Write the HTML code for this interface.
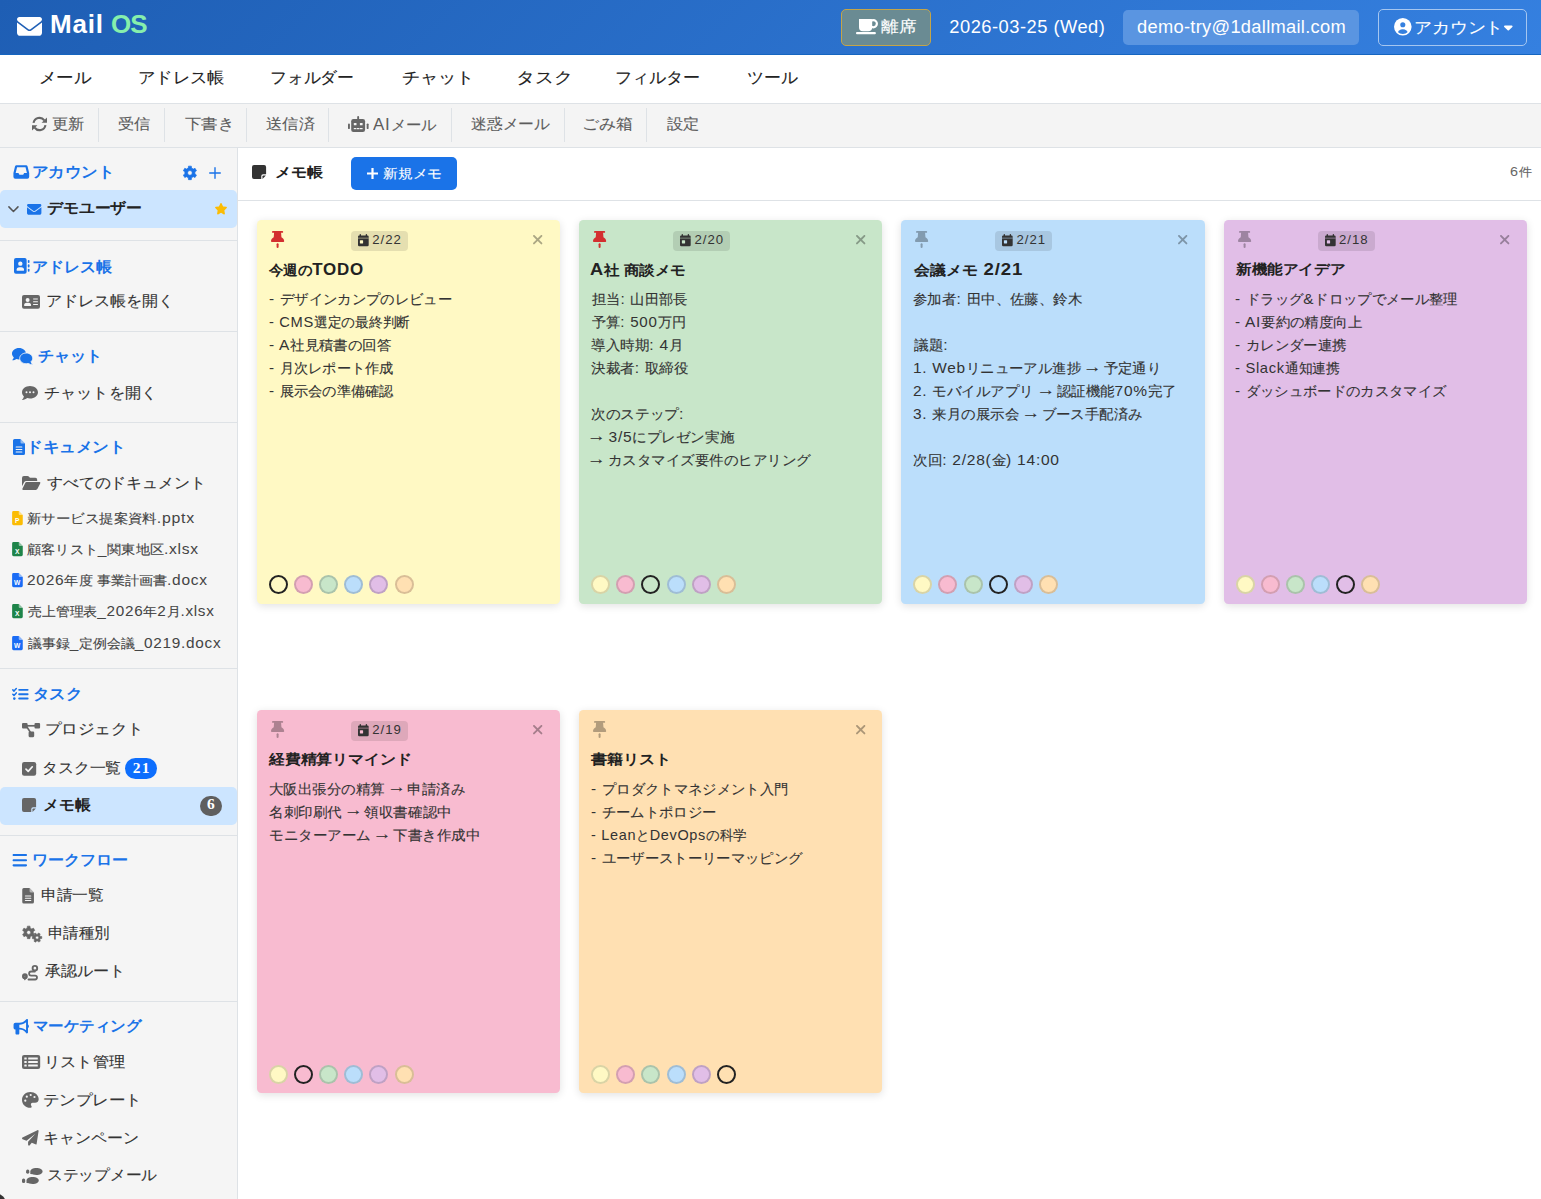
<!DOCTYPE html>
<html lang="ja">
<head>
<meta charset="utf-8">
<title>Mail OS</title>
<style>
*{box-sizing:border-box;margin:0;padding:0}
html,body{width:1541px;height:1199px;overflow:hidden;background:#fff}
body{font-family:"Liberation Sans",sans-serif;position:relative}
.b{position:absolute}
svg{position:absolute;overflow:visible}
#hdr{position:absolute;left:0;top:0;width:1541px;height:55px;background:linear-gradient(135deg,#1e5eb4 0%,#3580e0 100%);border-bottom:1px solid #1565c0}
#nav{position:absolute;left:0;top:55px;width:1541px;height:49px;background:#fff;border-bottom:1px solid #dee2e6}
#tb{position:absolute;left:0;top:104px;width:1541px;height:44px;background:#f4f4f4;border-bottom:1px solid #dee2e6}
#sb{position:absolute;left:0;top:148px;width:238px;height:1051px;background:#f5f5f5;border-right:1px solid #dee2e6}
#mh{position:absolute;left:238px;top:148px;width:1303px;height:53px;border-bottom:1px solid #dee2e6;background:#fff}
.card{border-radius:4.5px;box-shadow:0 2px 8px rgba(0,0,0,.12)}
.t{position:absolute;white-space:pre;line-height:24px;height:24px;transform-origin:0 50%}
.ar{display:inline-block;position:relative;top:-2.5px;transform:scale(1.3,1.15)}
</style>
</head>
<body>
<div id="hdr"></div><div id="nav"></div><div id="tb"></div><div id="sb"></div><div id="mh"></div>
<div class="b" style="left:841px;top:9px;width:90px;height:37px;border:1px solid #c4a548;border-radius:5px;background:#6a8b93"></div>
<div class="b" style="left:1123px;top:10px;width:236px;height:35px;border-radius:5px;background:#5a95e1"></div>
<div class="b" style="left:1378px;top:9px;width:149px;height:37px;border:1px solid #a5c6f0;border-radius:5px"></div>
<div class="b" style="left:98px;top:108px;width:1px;height:34px;background:#dee2e6"></div>
<div class="b" style="left:164px;top:108px;width:1px;height:34px;background:#dee2e6"></div>
<div class="b" style="left:246px;top:108px;width:1px;height:34px;background:#dee2e6"></div>
<div class="b" style="left:328px;top:108px;width:1px;height:34px;background:#dee2e6"></div>
<div class="b" style="left:451px;top:108px;width:1px;height:34px;background:#dee2e6"></div>
<div class="b" style="left:564px;top:108px;width:1px;height:34px;background:#dee2e6"></div>
<div class="b" style="left:646px;top:108px;width:1px;height:34px;background:#dee2e6"></div>
<div class="b" style="left:0;top:240px;width:237px;height:1px;background:#dee2e6"></div>
<div class="b" style="left:0;top:331px;width:237px;height:1px;background:#dee2e6"></div>
<div class="b" style="left:0;top:422px;width:237px;height:1px;background:#dee2e6"></div>
<div class="b" style="left:0;top:668px;width:237px;height:1px;background:#dee2e6"></div>
<div class="b" style="left:0;top:835px;width:237px;height:1px;background:#dee2e6"></div>
<div class="b" style="left:0;top:1001px;width:237px;height:1px;background:#dee2e6"></div>
<div class="b" style="left:0;top:190px;width:237px;height:38px;background:#cce5ff;border-radius:5px"></div>
<div class="b" style="left:0;top:787px;width:237px;height:38px;background:#cce5ff;border-radius:5px"></div>
<div class="b" style="left:125px;top:757.7px;width:32.1px;height:21.4px;background:#0d6efd;border-radius:10.7px"></div>
<div class="b" style="left:199.9px;top:795.9px;width:22px;height:20px;background:#5f5f5f;border-radius:10px"></div>
<div class="b" style="left:351px;top:157px;width:106px;height:33px;background:#1a73e8;border-radius:5px"></div>
<div class="b card" style="left:257px;top:220px;width:303px;height:384px;background:#fff9c4"></div>
<div class="b" style="left:350.9px;top:231.1px;width:57px;height:19.7px;border-radius:4px;background:rgba(0,0,0,.1)"></div>
<div class="b" style="left:269.0px;top:575.0px;width:19px;height:19px;border-radius:50%;background:#fff9c4;border:2px solid #222"></div>
<div class="b" style="left:294.1px;top:575.0px;width:19px;height:19px;border-radius:50%;background:#f8bbd0;border:2px solid rgba(0,0,0,.15)"></div>
<div class="b" style="left:319.2px;top:575.0px;width:19px;height:19px;border-radius:50%;background:#c8e6c9;border:2px solid rgba(0,0,0,.15)"></div>
<div class="b" style="left:344.3px;top:575.0px;width:19px;height:19px;border-radius:50%;background:#bbdefb;border:2px solid rgba(0,0,0,.15)"></div>
<div class="b" style="left:369.4px;top:575.0px;width:19px;height:19px;border-radius:50%;background:#e1bee7;border:2px solid rgba(0,0,0,.15)"></div>
<div class="b" style="left:394.5px;top:575.0px;width:19px;height:19px;border-radius:50%;background:#ffe0b2;border:2px solid rgba(0,0,0,.15)"></div>
<div class="b card" style="left:579px;top:220px;width:303px;height:384px;background:#c8e6c9"></div>
<div class="b" style="left:673.1px;top:231.1px;width:57px;height:19.7px;border-radius:4px;background:rgba(0,0,0,.1)"></div>
<div class="b" style="left:591.2px;top:575.0px;width:19px;height:19px;border-radius:50%;background:#fff9c4;border:2px solid rgba(0,0,0,.15)"></div>
<div class="b" style="left:616.3px;top:575.0px;width:19px;height:19px;border-radius:50%;background:#f8bbd0;border:2px solid rgba(0,0,0,.15)"></div>
<div class="b" style="left:641.4px;top:575.0px;width:19px;height:19px;border-radius:50%;background:#c8e6c9;border:2px solid #222"></div>
<div class="b" style="left:666.5px;top:575.0px;width:19px;height:19px;border-radius:50%;background:#bbdefb;border:2px solid rgba(0,0,0,.15)"></div>
<div class="b" style="left:691.6px;top:575.0px;width:19px;height:19px;border-radius:50%;background:#e1bee7;border:2px solid rgba(0,0,0,.15)"></div>
<div class="b" style="left:716.7px;top:575.0px;width:19px;height:19px;border-radius:50%;background:#ffe0b2;border:2px solid rgba(0,0,0,.15)"></div>
<div class="b card" style="left:901px;top:220px;width:304px;height:384px;background:#bbdefb"></div>
<div class="b" style="left:995.2px;top:231.1px;width:57px;height:19.7px;border-radius:4px;background:rgba(0,0,0,.1)"></div>
<div class="b" style="left:913.3px;top:575.0px;width:19px;height:19px;border-radius:50%;background:#fff9c4;border:2px solid rgba(0,0,0,.15)"></div>
<div class="b" style="left:938.4px;top:575.0px;width:19px;height:19px;border-radius:50%;background:#f8bbd0;border:2px solid rgba(0,0,0,.15)"></div>
<div class="b" style="left:963.5px;top:575.0px;width:19px;height:19px;border-radius:50%;background:#c8e6c9;border:2px solid rgba(0,0,0,.15)"></div>
<div class="b" style="left:988.6px;top:575.0px;width:19px;height:19px;border-radius:50%;background:#bbdefb;border:2px solid #222"></div>
<div class="b" style="left:1013.7px;top:575.0px;width:19px;height:19px;border-radius:50%;background:#e1bee7;border:2px solid rgba(0,0,0,.15)"></div>
<div class="b" style="left:1038.8px;top:575.0px;width:19px;height:19px;border-radius:50%;background:#ffe0b2;border:2px solid rgba(0,0,0,.15)"></div>
<div class="b card" style="left:1224px;top:220px;width:303px;height:384px;background:#e1bee7"></div>
<div class="b" style="left:1317.7px;top:231.1px;width:57px;height:19.7px;border-radius:4px;background:rgba(0,0,0,.1)"></div>
<div class="b" style="left:1235.8px;top:575.0px;width:19px;height:19px;border-radius:50%;background:#fff9c4;border:2px solid rgba(0,0,0,.15)"></div>
<div class="b" style="left:1260.9px;top:575.0px;width:19px;height:19px;border-radius:50%;background:#f8bbd0;border:2px solid rgba(0,0,0,.15)"></div>
<div class="b" style="left:1286.0px;top:575.0px;width:19px;height:19px;border-radius:50%;background:#c8e6c9;border:2px solid rgba(0,0,0,.15)"></div>
<div class="b" style="left:1311.1px;top:575.0px;width:19px;height:19px;border-radius:50%;background:#bbdefb;border:2px solid rgba(0,0,0,.15)"></div>
<div class="b" style="left:1336.2px;top:575.0px;width:19px;height:19px;border-radius:50%;background:#e1bee7;border:2px solid #222"></div>
<div class="b" style="left:1361.3px;top:575.0px;width:19px;height:19px;border-radius:50%;background:#ffe0b2;border:2px solid rgba(0,0,0,.15)"></div>
<div class="b card" style="left:257px;top:710px;width:303px;height:383px;background:#f8bbd0"></div>
<div class="b" style="left:350.9px;top:721.1px;width:57px;height:19.7px;border-radius:4px;background:rgba(0,0,0,.1)"></div>
<div class="b" style="left:269.0px;top:1065.0px;width:19px;height:19px;border-radius:50%;background:#fff9c4;border:2px solid rgba(0,0,0,.15)"></div>
<div class="b" style="left:294.1px;top:1065.0px;width:19px;height:19px;border-radius:50%;background:#f8bbd0;border:2px solid #222"></div>
<div class="b" style="left:319.2px;top:1065.0px;width:19px;height:19px;border-radius:50%;background:#c8e6c9;border:2px solid rgba(0,0,0,.15)"></div>
<div class="b" style="left:344.3px;top:1065.0px;width:19px;height:19px;border-radius:50%;background:#bbdefb;border:2px solid rgba(0,0,0,.15)"></div>
<div class="b" style="left:369.4px;top:1065.0px;width:19px;height:19px;border-radius:50%;background:#e1bee7;border:2px solid rgba(0,0,0,.15)"></div>
<div class="b" style="left:394.5px;top:1065.0px;width:19px;height:19px;border-radius:50%;background:#ffe0b2;border:2px solid rgba(0,0,0,.15)"></div>
<div class="b card" style="left:579px;top:710px;width:303px;height:383px;background:#ffe0b2"></div>
<div class="b" style="left:591.2px;top:1065.0px;width:19px;height:19px;border-radius:50%;background:#fff9c4;border:2px solid rgba(0,0,0,.15)"></div>
<div class="b" style="left:616.3px;top:1065.0px;width:19px;height:19px;border-radius:50%;background:#f8bbd0;border:2px solid rgba(0,0,0,.15)"></div>
<div class="b" style="left:641.4px;top:1065.0px;width:19px;height:19px;border-radius:50%;background:#c8e6c9;border:2px solid rgba(0,0,0,.15)"></div>
<div class="b" style="left:666.5px;top:1065.0px;width:19px;height:19px;border-radius:50%;background:#bbdefb;border:2px solid rgba(0,0,0,.15)"></div>
<div class="b" style="left:691.6px;top:1065.0px;width:19px;height:19px;border-radius:50%;background:#e1bee7;border:2px solid rgba(0,0,0,.15)"></div>
<div class="b" style="left:716.7px;top:1065.0px;width:19px;height:19px;border-radius:50%;background:#ffe0b2;border:2px solid #222"></div>
<svg style="left:17.0px;top:17.0px" width="25.0" height="18.8" viewBox="0 64 512 384" ><path fill="#fff" d="M48 64C21.5 64 0 85.5 0 112c0 15.1 7.1 29.3 19.2 38.4L236.8 313.6c11.4 8.5 27 8.5 38.4 0L492.8 150.4c12.1-9.1 19.2-23.3 19.2-38.4c0-26.5-21.5-48-48-48H48zM0 176V384c0 35.3 28.7 64 64 64H448c35.3 0 64-28.7 64-64V176L294.4 339.2c-22.8 17.1-54 17.1-76.8 0L0 176z"/></svg>
<svg style="left:855.8px;top:18.8px" width="22.2" height="15.2" viewBox="0 0 22.2 15.2" ><path fill="#fff" d="M3 0h12.2a1 1 0 0 1 1 1v7.2a4 4 0 0 1-4 4H7a4 4 0 0 1-4-4z"/><circle cx="17.3" cy="4.7" r="3.6" fill="none" stroke="#fff" stroke-width="2.2"/><rect x="0" y="13.1" width="19.9" height="2.1" rx="1" fill="#fff"/></svg>
<svg style="left:1393.7px;top:17.7px" width="17.6" height="17.6" viewBox="0 0 100 100" ><defs><clipPath id="cu"><circle cx="50" cy="50" r="41"/></clipPath></defs><circle cx="50" cy="50" r="50" fill="#fff"/><circle cx="50" cy="38" r="14.5" fill="#3580df"/><ellipse cx="50" cy="86" rx="29" ry="22" fill="#3580df" clip-path="url(#cu)"/></svg>
<svg style="left:1503.8px;top:24.5px" width="8.6" height="5.8" viewBox="0 176 320 216" ><path fill="#fff" d="M137.4 374.6c12.5 12.5 32.8 12.5 45.3 0l128-128c9.2-9.2 11.9-22.9 6.9-34.9s-16.6-19.8-29.6-19.8L32 192c-12.9 0-24.6 7.8-29.6 19.8s-2.2 25.7 6.9 34.9l128 128z"/></svg>
<svg style="left:32.0px;top:116.9px" width="15.0" height="14.0" viewBox="0 0 15 14" ><g fill="none" stroke="#666" stroke-width="2.1"><path d="M1.55 5.9A5.95 5.95 0 0 1 12.3 3.4"/><path d="M13.45 8.1A5.95 5.95 0 0 1 2.7 10.6"/></g><path fill="#666" d="M15 .4V5.8H9.6z"/><path fill="#666" d="M0 13.6V8.2H5.4z"/></svg>
<svg style="left:348.2px;top:115.8px" width="20.6" height="16.0" viewBox="0 0 20.6 16" ><rect x="9.2" y="0" width="1.9" height="4" rx=".9" fill="#666"/><rect x="3.2" y="3.1" width="13.9" height="12.9" rx="2.2" fill="#666"/><rect x="0" y="7.4" width="1.9" height="5.7" rx=".95" fill="#666"/><rect x="18.7" y="7.4" width="1.9" height="5.7" rx=".95" fill="#666"/><rect x="5.8" y="7" width="2.7" height="2.2" rx=".5" fill="#f4f4f4"/><rect x="11.9" y="7" width="2.7" height="2.2" rx=".5" fill="#f4f4f4"/><rect x="5.8" y="12" width="2.6" height="1.2" fill="#f4f4f4"/><rect x="8.9" y="12" width="2.6" height="1.2" fill="#f4f4f4"/><rect x="12" y="12" width="2.6" height="1.2" fill="#f4f4f4"/></svg>
<svg style="left:12.5px;top:165.1px" width="16.6" height="13.8" viewBox="0 0 16 14" ><path fill="#1a73e8" fill-rule="evenodd" d="M3.2 .3H12.8a1.7 1.7 0 0 1 1.6 1.25L16 8V12a1.9 1.9 0 0 1-1.9 1.9H1.9A1.9 1.9 0 0 1 0 12V8L1.6 1.55A1.7 1.7 0 0 1 3.2 .3zM3.7 2.4L2.3 8H5.1l1 2h3.8l1-2h2.8L12.3 2.4z"/></svg>
<svg style="left:182.6px;top:166.0px" width="13.8" height="13.8" viewBox="0 0 100 100" ><path fill="#1a73e8" fill-rule="evenodd" stroke="#1a73e8" stroke-width="5" stroke-linejoin="round" d="M38.57 14.81 L39.60 1.09 L60.40 1.09 L61.43 14.81 L74.76 22.50 L87.16 16.54 L97.55 34.55 L86.19 42.31 L86.19 57.69 L97.55 65.45 L87.16 83.46 L74.76 77.50 L61.43 85.19 L60.40 98.91 L39.60 98.91 L38.57 85.19 L25.24 77.50 L12.84 83.46 L2.45 65.45 L13.81 57.69 L13.81 42.31 L2.45 34.55 L12.84 16.54 L25.24 22.50Z M33.00 50.00 a17.00 17.00 0 1 0 34.00 0 a17.00 17.00 0 1 0 -34.00 0Z"/></svg>
<svg style="left:209.2px;top:166.7px" width="12.0" height="12.0" viewBox="16 48 416 416" ><path fill="#1a73e8" d="M248 72c0-13.300-10.700-24-24-24s-24 10.700-24 24V232H40c-13.300 0-24 10.700-24 24s10.700 24 24 24H200V440c0 13.300 10.700 24 24 24s24-10.700 24-24V280H408c13.300 0 24-10.700 24-24s-10.700-24-24-24H248V72z"/></svg>
<svg style="left:8.1px;top:205.6px" width="10.9" height="6.6" viewBox="0 0 10.9 6.6" ><path fill="none" stroke="#555" stroke-width="1.5" stroke-linecap="round" stroke-linejoin="round" d="M.9 .9L5.45 5.5 10 .9"/></svg>
<svg style="left:26.8px;top:203.7px" width="14.4" height="10.8" viewBox="0 64 512 384" ><path fill="#1a73e8" d="M48 64C21.5 64 0 85.5 0 112c0 15.1 7.1 29.3 19.2 38.4L236.8 313.6c11.4 8.5 27 8.5 38.4 0L492.8 150.4c12.1-9.1 19.2-23.3 19.2-38.4c0-26.5-21.5-48-48-48H48zM0 176V384c0 35.3 28.7 64 64 64H448c35.3 0 64-28.7 64-64V176L294.4 339.2c-22.8 17.1-54 17.1-76.8 0L0 176z"/></svg>
<svg style="left:214.9px;top:203.1px" width="12.0" height="11.5" viewBox="20 0 536 512" ><path fill="#fbbc04" d="M316.9 18C311.6 7 300.4 0 288.1 0s-23.4 7-28.8 18L195 150.3 51.4 171.5c-12 1.8-22 10.2-25.7 21.7s-.7 24.2 7.9 32.7L137.8 329 113.2 474.7c-2 12 3 24.2 12.9 31.3s23 8 33.8 2.3l128.3-68.5 128.3 68.5c10.8 5.7 23.9 4.9 33.8-2.3s14.9-19.3 12.9-31.3L438.5 329 542.7 225.9c8.6-8.5 11.7-21.2 7.9-32.7s-13.7-19.9-25.7-21.7L381.2 150.3 316.9 18z"/></svg>
<svg style="left:13.7px;top:258.3px" width="15.8" height="15.8" viewBox="0 0 16 16" ><rect x="0" y="0" width="12.8" height="16" rx="2" fill="#1a73e8"/><rect x="14" y="2" width="1.7" height="3.1" rx=".8" fill="#1a73e8"/><rect x="14" y="6.45" width="1.7" height="3.1" rx=".8" fill="#1a73e8"/><rect x="14" y="10.9" width="1.7" height="3.1" rx=".8" fill="#1a73e8"/><circle cx="6.4" cy="5.7" r="2.2" fill="#f5f5f5"/><path fill="#f5f5f5" d="M2.6 12.3a2.9 2.9 0 0 1 2.9-3h1.8a2.9 2.9 0 0 1 2.9 3 .5.5 0 0 1-.5.5H3.100a.5.5 0 0 1-.5-.5z"/></svg>
<svg style="left:22.1px;top:295.1px" width="18.0" height="13.7" viewBox="0 0 18 13.7" ><rect width="18" height="13.7" rx="2" fill="#666"/><circle cx="5.6" cy="4.9" r="2" fill="#f5f5f5"/><path fill="#f5f5f5" d="M2.100 10.600a2.700 2.700 0 0 1 2.700-2.800h1.600a2.700 2.700 0 0 1 2.700 2.800 .4.400 0 0 1-.4.400H2.500a.4.400 0 0 1-.4-.4z"/><rect x="11" y="3.4" width="5" height="1.100" rx=".5" fill="#f5f5f5"/><rect x="11" y="6.200" width="5" height="1.100" rx=".5" fill="#f5f5f5"/><rect x="11" y="9" width="5" height="1.100" rx=".5" fill="#f5f5f5"/></svg>
<svg style="left:12.3px;top:347.8px" width="20.7" height="16.4" viewBox="0 0 20.7 16.4" ><path fill="#1a73e8" d="M7 0c3.900 0 7 2.500 7 5.700s-3.100 5.700-7 5.700c-.9 0-1.800-.100-2.600-.4-1 .700-2.500 1.300-3.900 1.300-.2 0-.3-.2-.2-.4.700-.8 1.300-1.800 1.500-2.700C.6 8.100 0 7 0 5.700 0 2.500 3.100 0 7 0z"/><path fill="#1a73e8" stroke="#f5f5f5" stroke-width=".9" d="M14.200 5c3.600 0 6.500 2.400 6.500 5.400 0 1.300-.6 2.400-1.600 3.300.2.900.8 1.900 1.500 2.700.100.200 0 .4-.2.400-1.400 0-2.900-.6-3.900-1.300-.7.200-1.500.3-2.300.3-3.600 0-6.500-2.400-6.500-5.400S10.600 5 14.200 5z"/></svg>
<svg style="left:21.7px;top:386.2px" width="16.0" height="14.2" viewBox="0 0 16 14.2" ><path fill="#666" d="M8 0c4.400 0 8 2.800 8 6.300s-3.600 6.300-8 6.300c-1 0-2-.2-2.900-.5-1.100.9-2.900 1.900-4.700 2-.3 0-.4-.3-.3-.5.900-.9 1.600-2.200 1.800-3.200C.7 9.300 0 7.900 0 6.300 0 2.800 3.600 0 8 0z"/><circle cx="4.500" cy="6.300" r="1" fill="#f5f5f5"/><circle cx="8" cy="6.300" r="1" fill="#f5f5f5"/><circle cx="11.500" cy="6.300" r="1" fill="#f5f5f5"/></svg>
<svg style="left:12.7px;top:439.0px" width="12.0" height="16.0" viewBox="0 0 12 16" ><path fill="#1a73e8" d="M1.6 0h5.9L12 4.5v9.9A1.6 1.6 0 0 1 10.4 16H1.6A1.6 1.6 0 0 1 0 14.4V1.6A1.6 1.6 0 0 1 1.6 0z"/><path fill="#f5f5f5" fill-opacity="0.55" d="M7.5 0L12 4.5H8.6A1.1 1.1 0 0 1 7.5 3.4z"/><rect x="2.6" y="7.600" width="6.800" height="1" rx=".5" fill="#f5f5f5"/><rect x="2.6" y="10" width="6.800" height="1" rx=".5" fill="#f5f5f5"/><rect x="2.6" y="12.400" width="6.800" height="1" rx=".5" fill="#f5f5f5"/></svg>
<svg style="left:21.9px;top:476.0px" width="18.3" height="13.9" viewBox="0 0 18.3 13.9" ><path fill="#666" d="M0 1.900A1.900 1.900 0 0 1 1.900 0h3.600a1.900 1.900 0 0 1 1.300.55l.9.9c.2.200.4.300.7.300h4.900a1.900 1.900 0 0 1 1.900 1.900v1.300H4.300A2.500 2.500 0 0 0 2.100 6.300L0 10.300z"/><path fill="#666" d="M4.600 6.100h12.700a1 1 0 0 1 .9 1.450l-2.700 5.300a1.900 1.900 0 0 1-1.700 1.050H1.100a.8.800 0 0 1-.7-1.200l2.700-5.500A1.700 1.700 0 0 1 4.600 6.100z"/></svg>
<svg style="left:12.3px;top:510.9px" width="10.9" height="14.2" viewBox="0 0 12 16" ><path fill="#fbbc04" d="M1.6 0h5.9L12 4.5v9.9A1.6 1.6 0 0 1 10.4 16H1.6A1.6 1.6 0 0 1 0 14.4V1.6A1.6 1.6 0 0 1 1.6 0z"/><path fill="#fff" fill-opacity="0.5" d="M7.5 0L12 4.5H8.6A1.1 1.1 0 0 1 7.5 3.4z"/><text x="5.700" y="13.400" text-anchor="middle" font-family="Liberation Sans,sans-serif" font-weight="bold" font-size="7.500" fill="#fff">P</text></svg>
<svg style="left:12.3px;top:542.1px" width="10.9" height="14.2" viewBox="0 0 12 16" ><path fill="#1e8449" d="M1.6 0h5.9L12 4.5v9.9A1.6 1.6 0 0 1 10.4 16H1.6A1.6 1.6 0 0 1 0 14.4V1.6A1.6 1.6 0 0 1 1.6 0z"/><path fill="#fff" fill-opacity="0.5" d="M7.5 0L12 4.5H8.6A1.1 1.1 0 0 1 7.5 3.4z"/><text x="5.700" y="13.400" text-anchor="middle" font-family="Liberation Sans,sans-serif" font-weight="bold" font-size="7.500" fill="#fff">X</text></svg>
<svg style="left:12.3px;top:573.2px" width="10.9" height="14.2" viewBox="0 0 12 16" ><path fill="#1a6cf5" d="M1.6 0h5.9L12 4.5v9.9A1.6 1.6 0 0 1 10.4 16H1.6A1.6 1.6 0 0 1 0 14.4V1.6A1.6 1.6 0 0 1 1.6 0z"/><path fill="#fff" fill-opacity="0.5" d="M7.5 0L12 4.5H8.6A1.1 1.1 0 0 1 7.5 3.4z"/><text x="5.700" y="13.400" text-anchor="middle" font-family="Liberation Sans,sans-serif" font-weight="bold" font-size="7.500" fill="#fff">W</text></svg>
<svg style="left:12.3px;top:604.4px" width="10.9" height="14.2" viewBox="0 0 12 16" ><path fill="#1e8449" d="M1.6 0h5.9L12 4.5v9.9A1.6 1.6 0 0 1 10.4 16H1.6A1.6 1.6 0 0 1 0 14.4V1.6A1.6 1.6 0 0 1 1.6 0z"/><path fill="#fff" fill-opacity="0.5" d="M7.5 0L12 4.5H8.6A1.1 1.1 0 0 1 7.5 3.4z"/><text x="5.700" y="13.400" text-anchor="middle" font-family="Liberation Sans,sans-serif" font-weight="bold" font-size="7.500" fill="#fff">X</text></svg>
<svg style="left:12.3px;top:635.5px" width="10.9" height="14.2" viewBox="0 0 12 16" ><path fill="#1a6cf5" d="M1.6 0h5.9L12 4.5v9.9A1.6 1.6 0 0 1 10.4 16H1.6A1.6 1.6 0 0 1 0 14.4V1.6A1.6 1.6 0 0 1 1.6 0z"/><path fill="#fff" fill-opacity="0.5" d="M7.5 0L12 4.5H8.6A1.1 1.1 0 0 1 7.5 3.4z"/><text x="5.700" y="13.400" text-anchor="middle" font-family="Liberation Sans,sans-serif" font-weight="bold" font-size="7.500" fill="#fff">W</text></svg>
<svg style="left:12.2px;top:687.8px" width="16.6" height="12.4" viewBox="0 0 16.6 12.4" ><g fill="#1a73e8"><rect x="6.200" y=".9" width="10.400" height="1.900" rx=".95"/><rect x="6.200" y="5.250" width="10.400" height="1.900" rx=".95"/><rect x="6.200" y="9.600" width="10.400" height="1.900" rx=".95"/><circle cx="2.300" cy="10.600" r="1.300"/></g><g fill="none" stroke="#1a73e8" stroke-width="1.500" stroke-linecap="round" stroke-linejoin="round"><path d="M.8 1.900L2 3.100 4.300.6"/><path d="M.8 6.200L2 7.400 4.300 4.900"/></g></svg>
<svg style="left:21.8px;top:722.7px" width="18.1" height="14.2" viewBox="0 0 18.1 14.2" ><g fill="#666"><rect x="0" y="0" width="5.600" height="5.600" rx="1.100"/><rect x="12.500" y="0" width="5.600" height="5.600" rx="1.100"/><rect x="6.600" y="8.600" width="5.600" height="5.600" rx="1.100"/></g><g fill="none" stroke="#666" stroke-width="1.700"><path d="M5 2.800H13"/><path d="M4.600 3.500L8.600 9.600"/></g></svg>
<svg style="left:21.8px;top:761.5px" width="14.2" height="13.8" viewBox="0 0 14.2 13.8" ><rect width="14.200" height="13.800" rx="2.200" fill="#666"/><path fill="none" stroke="#f5f5f5" stroke-width="1.700" stroke-linecap="round" stroke-linejoin="round" d="M4 7.200L6.200 9.400 10.300 4.800"/></svg>
<svg style="left:21.8px;top:798.4px" width="14.1" height="14.1" viewBox="0 0 14 14" ><path fill="#666" d="M2 0h10a2 2 0 0 1 2 2v7.300h-3a1.800 1.800 0 0 0-1.800 1.800V14H2a2 2 0 0 1-2-2V2a2 2 0 0 1 2-2z"/><path fill="#666" d="M10.400 13.800V11.400a1 1 0 0 1 1-1h2.400z"/></svg>
<svg style="left:12.2px;top:853.8px" width="15.6" height="12.4" viewBox="0 64 448 384" ><path fill="#1a73e8" d="M0 96C0 78.3 14.3 64 32 64H416c17.7 0 32 14.3 32 32s-14.3 32-32 32H32C14.3 128 0 113.7 0 96zM0 256c0-17.7 14.3-32 32-32H416c17.7 0 32 14.3 32 32s-14.3 32-32 32H32c-17.7 0-32-14.3-32-32zM448 416c0 17.7-14.3 32-32 32H32c-17.7 0-32-14.3-32-32s14.3-32 32-32H416c17.7 0 32 14.3 32 32z"/></svg>
<svg style="left:21.8px;top:888.2px" width="12.2" height="15.6" viewBox="0 0 12 16" ><path fill="#666" d="M1.6 0h5.9L12 4.5v9.9A1.6 1.6 0 0 1 10.4 16H1.6A1.6 1.6 0 0 1 0 14.4V1.6A1.6 1.6 0 0 1 1.6 0z"/><path fill="#f5f5f5" fill-opacity="0.55" d="M7.5 0L12 4.5H8.6A1.1 1.1 0 0 1 7.5 3.4z"/><rect x="2.6" y="7.600" width="6.800" height="1" rx=".5" fill="#f5f5f5"/><rect x="2.6" y="10" width="6.800" height="1" rx=".5" fill="#f5f5f5"/><rect x="2.6" y="12.400" width="6.800" height="1" rx=".5" fill="#f5f5f5"/></svg>
<svg style="left:21.8px;top:926.2px" width="20.2" height="16.4" viewBox="0 0 98 82" ><path fill="#666" fill-rule="evenodd" stroke="#666" stroke-width="3" stroke-linejoin="round" d="M24.74 9.65 L25.35 0.70 L38.65 0.70 L39.26 9.65 L47.72 14.54 L55.78 10.59 L62.43 22.11 L54.99 27.11 L54.99 36.89 L62.43 41.89 L55.78 53.41 L47.72 49.46 L39.26 54.35 L38.65 63.30 L25.35 63.30 L24.74 54.35 L16.28 49.46 L8.22 53.41 L1.57 41.89 L9.01 36.89 L9.01 27.11 L1.57 22.11 L8.22 10.59 L16.28 14.54Z M22.00 32.00 a10.00 10.00 0 1 0 20.00 0 a10.00 10.00 0 1 0 -20.00 0Z M77.23 40.80 L80.88 35.01 L89.63 39.79 L86.73 45.99 L90.51 52.20 L97.35 52.46 L97.59 62.43 L90.77 63.01 L87.28 69.40 L90.48 75.45 L81.95 80.64 L78.04 75.03 L70.77 75.20 L67.12 80.99 L58.37 76.21 L61.27 70.01 L57.49 63.80 L50.65 63.54 L50.41 53.57 L57.23 52.99 L60.72 46.60 L57.52 40.55 L66.05 35.36 L69.96 40.97Z M66.00 58.00 a8.00 8.00 0 1 0 16.00 0 a8.00 8.00 0 1 0 -16.00 0Z"/></svg>
<svg style="left:21.8px;top:964.5px" width="16.3" height="15.5" viewBox="0 0 16.300 15.500" ><g fill="none" stroke="#666"><circle cx="12.900" cy="3.200" r="2.300" stroke-width="1.900"/><circle cx="2.900" cy="11.200" r="1.600" stroke-width="2.600"/><path stroke-width="1.800" stroke-linecap="round" d="M12.900 6.500H9.200a2.100 2.100 0 0 0 0 4.200h3.900a1.900 1.900 0 0 1 0 3.800H6.500"/></g><path fill="#666" d="M.5 12.200h4.800L2.900 15.500z"/></svg>
<svg style="left:12.6px;top:1018.7px" width="16.5" height="15.4" viewBox="0 0 512 512" ><path fill="#1a73e8" d="M480 32c0-12.900-7.800-24.600-19.800-29.600s-25.700-2.200-34.900 6.900L381.700 53c-48 48-113.100 75-181 75H192 160 64c-35.300 0-64 28.700-64 64v96c0 35.300 28.700 64 64 64l0 128c0 17.700 14.300 32 32 32h64c17.700 0 32-14.300 32-32V352l8.700 0c67.900 0 133 27 181 75l43.600 43.600c9.200 9.200 22.900 11.900 34.900 6.900s19.800-16.600 19.800-29.600V300.400c18.600-8.800 32-32.500 32-60.400s-13.400-51.600-32-60.400V32zm-64 76.700V240 371.300C357.200 317.800 280.500 288 200.700 288H192V192h8.700c79.800 0 156.500-29.800 215.300-83.300z"/></svg>
<svg style="left:21.8px;top:1054.8px" width="18.2" height="14.1" viewBox="0 0 18.200 14.100" ><rect width="18.200" height="14.100" rx="2.100" fill="#666"/><rect x="2.300" y="2.5" width="2.400" height="2" rx=".3" fill="#f5f5f5"/><rect x="6.200" y="2.5" width="9.600" height="2" rx=".3" fill="#f5f5f5"/><rect x="2.300" y="6.05" width="2.400" height="2" rx=".3" fill="#f5f5f5"/><rect x="6.200" y="6.05" width="9.600" height="2" rx=".3" fill="#f5f5f5"/><rect x="2.300" y="9.6" width="2.400" height="2" rx=".3" fill="#f5f5f5"/><rect x="6.200" y="9.6" width="9.600" height="2" rx=".3" fill="#f5f5f5"/></svg>
<svg style="left:21.8px;top:1092.0px" width="16.7" height="15.8" viewBox="0 0 16.700 15.800" ><path fill="#666" d="M8.300 0C13 0 16.700 3.200 16.700 7.200c0 2.400-1.800 3.600-3.600 3.600h-2.500c-1 0-1.700.8-1.700 1.700 0 .5.200.8.400 1.200.2.400.4.700.4 1.100 0 .7-.6 1-1.400 1C3.700 15.800 0 12.300 0 7.900S3.700 0 8.300 0z"/><circle cx="3.300" cy="8.700" r="1.100" fill="#f5f5f5"/><circle cx="4.800" cy="4.700" r="1.100" fill="#f5f5f5"/><circle cx="8.700" cy="3" r="1.100" fill="#f5f5f5"/><circle cx="12.500" cy="5" r="1.100" fill="#f5f5f5"/></svg>
<svg style="left:21.8px;top:1129.9px" width="16.7" height="15.8" viewBox="0 0 16.700 15.800" ><path fill="#666" d="M16.200.15a.7.700 0 0 1 .45.700l-2 12.800a.9.900 0 0 1-1.250.7l-3.600-1.500-2.100 2.500a.9.900 0 0 1-1.600-.6v-3l7.300-7.900-8.900 7L.6 9.200A.9.900 0 0 1 .5 7.600L15.400.15a.8.800 0 0 1 .8 0z"/></svg>
<svg style="left:21.8px;top:1168.0px" width="20.6" height="16.0" viewBox="0 0 20.6 16" ><g fill="#666"><path d="M8.300 3.500C8.300 1.600 10.900 0 14.400 0s6.200 1.500 6.200 3.400S17.900 7 14.400 7c-1.200 0-2.200-.2-3.200-.5-.9-.3-1.600-.5-2.900-.5z"/><rect x="4.100" y="1.400" width="3.200" height="4.400" rx="1.500"/><path d="M4.500 12.500C4.500 10.600 7.100 9 10.600 9s6.200 1.500 6.200 3.400S14.100 16 10.600 16c-1.200 0-2.200-.2-3.200-.5-.9-.3-1.600-.5-2.900-.5z"/><rect x="0" y="10.600" width="3.200" height="4.400" rx="1.500"/></g></svg>
<div class="b" style="left:-16px;top:1193px;width:22px;height:22px;border-radius:50%;background:#333"></div>
<svg style="left:252.0px;top:164.9px" width="14.1" height="14.1" viewBox="0 0 14 14" ><path fill="#333" d="M2 0h10a2 2 0 0 1 2 2v7.300h-3a1.800 1.800 0 0 0-1.800 1.800V14H2a2 2 0 0 1-2-2V2a2 2 0 0 1 2-2z"/><path fill="#333" d="M10.400 13.800V11.400a1 1 0 0 1 1-1h2.400z"/></svg>
<svg style="left:367.1px;top:167.6px" width="11.0" height="11.0" viewBox="0 0 11 11" ><path fill="#fff" d="M4.400 0h2.200v4.400H11v2.200H6.600V11H4.400V6.600H0V4.400h4.400z"/></svg>
<svg style="left:270.9px;top:231.1px" width="13.2" height="16.9" viewBox="0 0 13.2 16.9" ><g fill="#d32f2f" fill-opacity="1"><path d="M1.900 0h9.400a.9.900 0 0 1 0 1.800h-1.200l.35 4.500c1.500.8 2.600 2.100 2.750 3.800a.9.900 0 0 1-.9 1H.9a.9.900 0 0 1-.9-1C.15 8.400 1.250 7.100 2.750 6.300L3.100 1.800H1.900a.9.900 0 0 1 0-1.800z"/><rect x="5.600" y="12.200" width="2" height="4.700" rx="1"/></g></svg>
<svg style="left:533.3px;top:235.2px" width="9.4" height="9.4" viewBox="32 96 320 320" ><path fill="#000" fill-opacity=".33" d="M342.6 150.6c12.5-12.5 12.5-32.8 0-45.3s-32.8-12.5-45.3 0L192 210.7 86.6 105.4c-12.5-12.5-32.8-12.5-45.3 0s-12.5 32.8 0 45.3L146.7 256 41.4 361.4c-12.5 12.5-12.5 32.8 0 45.3s32.8 12.5 45.3 0L192 301.3 297.4 406.6c12.5 12.5 32.8 12.5 45.3 0s12.5-32.8 0-45.3L237.3 256 342.6 150.6z"/></svg>
<svg style="left:358.1px;top:233.6px" width="10.7" height="12.3" viewBox="0 0 10.700 12.300" ><path fill="#333" d="M2.300 0a.7.700 0 0 1 .7.700v.8h4.700V.7a.7.700 0 0 1 1.400 0v.8h.3a1.300 1.300 0 0 1 1.300 1.300v8.200a1.300 1.300 0 0 1-1.300 1.300H1.300A1.300 1.300 0 0 1 0 11V2.800a1.300 1.300 0 0 1 1.300-1.300h.3V.7a.7.700 0 0 1 .7-.7z"/><rect x="0" y="3.700" width="10.700" height=".8" fill="#fff9c4" fill-opacity=".6"/><rect x="1.900" y="6.300" width="3.200" height="3.100" rx=".4" fill="#fff9c4"/></svg>
<svg style="left:593.1px;top:231.1px" width="13.2" height="16.9" viewBox="0 0 13.2 16.9" ><g fill="#d32f2f" fill-opacity="1"><path d="M1.900 0h9.400a.9.900 0 0 1 0 1.800h-1.200l.35 4.500c1.500.8 2.600 2.100 2.750 3.800a.9.900 0 0 1-.9 1H.9a.9.900 0 0 1-.9-1C.15 8.400 1.250 7.100 2.750 6.300L3.100 1.800H1.900a.9.900 0 0 1 0-1.800z"/><rect x="5.600" y="12.200" width="2" height="4.700" rx="1"/></g></svg>
<svg style="left:855.5px;top:235.2px" width="9.4" height="9.4" viewBox="32 96 320 320" ><path fill="#000" fill-opacity=".33" d="M342.6 150.6c12.5-12.5 12.5-32.8 0-45.3s-32.8-12.5-45.3 0L192 210.7 86.6 105.4c-12.5-12.5-32.8-12.5-45.3 0s-12.5 32.8 0 45.3L146.7 256 41.4 361.4c-12.5 12.5-12.5 32.8 0 45.3s32.8 12.5 45.3 0L192 301.3 297.4 406.6c12.5 12.5 32.8 12.5 45.3 0s12.5-32.8 0-45.3L237.3 256 342.6 150.6z"/></svg>
<svg style="left:680.3px;top:233.6px" width="10.7" height="12.3" viewBox="0 0 10.700 12.300" ><path fill="#333" d="M2.300 0a.7.700 0 0 1 .7.700v.8h4.700V.7a.7.700 0 0 1 1.400 0v.8h.3a1.300 1.300 0 0 1 1.300 1.300v8.200a1.300 1.300 0 0 1-1.300 1.300H1.300A1.300 1.300 0 0 1 0 11V2.800a1.300 1.300 0 0 1 1.300-1.300h.3V.7a.7.700 0 0 1 .7-.7z"/><rect x="0" y="3.700" width="10.700" height=".8" fill="#c8e6c9" fill-opacity=".6"/><rect x="1.900" y="6.300" width="3.200" height="3.100" rx=".4" fill="#c8e6c9"/></svg>
<svg style="left:915.2px;top:231.1px" width="13.2" height="16.9" viewBox="0 0 13.2 16.9" ><g fill="#000" fill-opacity=".3"><path d="M1.900 0h9.400a.9.900 0 0 1 0 1.800h-1.200l.35 4.500c1.500.8 2.600 2.100 2.750 3.800a.9.900 0 0 1-.9 1H.9a.9.900 0 0 1-.9-1C.15 8.400 1.250 7.100 2.750 6.300L3.100 1.800H1.900a.9.900 0 0 1 0-1.800z"/><rect x="5.600" y="12.200" width="2" height="4.700" rx="1"/></g></svg>
<svg style="left:1177.6px;top:235.2px" width="9.4" height="9.4" viewBox="32 96 320 320" ><path fill="#000" fill-opacity=".33" d="M342.6 150.6c12.5-12.5 12.5-32.8 0-45.3s-32.8-12.5-45.3 0L192 210.7 86.6 105.4c-12.5-12.5-32.8-12.5-45.3 0s-12.5 32.8 0 45.3L146.7 256 41.4 361.4c-12.5 12.5-12.5 32.8 0 45.3s32.8 12.5 45.3 0L192 301.3 297.4 406.6c12.5 12.5 32.8 12.5 45.3 0s12.5-32.8 0-45.3L237.3 256 342.6 150.6z"/></svg>
<svg style="left:1002.4px;top:233.6px" width="10.7" height="12.3" viewBox="0 0 10.700 12.300" ><path fill="#333" d="M2.300 0a.7.700 0 0 1 .7.700v.8h4.700V.7a.7.700 0 0 1 1.400 0v.8h.3a1.300 1.300 0 0 1 1.300 1.300v8.200a1.300 1.300 0 0 1-1.300 1.300H1.300A1.300 1.300 0 0 1 0 11V2.800a1.300 1.300 0 0 1 1.300-1.300h.3V.7a.7.700 0 0 1 .7-.7z"/><rect x="0" y="3.700" width="10.700" height=".8" fill="#bbdefb" fill-opacity=".6"/><rect x="1.900" y="6.300" width="3.200" height="3.100" rx=".4" fill="#bbdefb"/></svg>
<svg style="left:1237.7px;top:231.1px" width="13.2" height="16.9" viewBox="0 0 13.2 16.9" ><g fill="#000" fill-opacity=".3"><path d="M1.900 0h9.400a.9.900 0 0 1 0 1.800h-1.200l.35 4.500c1.500.8 2.600 2.100 2.750 3.800a.9.900 0 0 1-.9 1H.9a.9.900 0 0 1-.9-1C.15 8.400 1.250 7.100 2.750 6.300L3.100 1.800H1.900a.9.900 0 0 1 0-1.800z"/><rect x="5.600" y="12.200" width="2" height="4.700" rx="1"/></g></svg>
<svg style="left:1500.1px;top:235.2px" width="9.4" height="9.4" viewBox="32 96 320 320" ><path fill="#000" fill-opacity=".33" d="M342.6 150.6c12.5-12.5 12.5-32.8 0-45.3s-32.8-12.5-45.3 0L192 210.7 86.6 105.4c-12.5-12.5-32.8-12.5-45.3 0s-12.5 32.8 0 45.3L146.7 256 41.4 361.4c-12.5 12.5-12.5 32.8 0 45.3s32.8 12.5 45.3 0L192 301.3 297.4 406.6c12.5 12.5 32.8 12.5 45.3 0s12.5-32.8 0-45.3L237.3 256 342.6 150.6z"/></svg>
<svg style="left:1324.9px;top:233.6px" width="10.7" height="12.3" viewBox="0 0 10.700 12.300" ><path fill="#333" d="M2.300 0a.7.700 0 0 1 .7.700v.8h4.700V.7a.7.700 0 0 1 1.400 0v.8h.3a1.300 1.300 0 0 1 1.300 1.300v8.200a1.300 1.300 0 0 1-1.300 1.300H1.300A1.300 1.300 0 0 1 0 11V2.800a1.300 1.300 0 0 1 1.300-1.300h.3V.7a.7.700 0 0 1 .7-.7z"/><rect x="0" y="3.700" width="10.700" height=".8" fill="#e1bee7" fill-opacity=".6"/><rect x="1.900" y="6.300" width="3.200" height="3.100" rx=".4" fill="#e1bee7"/></svg>
<svg style="left:270.9px;top:721.1px" width="13.2" height="16.9" viewBox="0 0 13.2 16.9" ><g fill="#000" fill-opacity=".3"><path d="M1.900 0h9.400a.9.900 0 0 1 0 1.800h-1.200l.35 4.500c1.500.8 2.600 2.100 2.750 3.800a.9.900 0 0 1-.9 1H.9a.9.900 0 0 1-.9-1C.15 8.400 1.250 7.100 2.750 6.300L3.100 1.800H1.900a.9.900 0 0 1 0-1.800z"/><rect x="5.600" y="12.200" width="2" height="4.700" rx="1"/></g></svg>
<svg style="left:533.3px;top:725.2px" width="9.4" height="9.4" viewBox="32 96 320 320" ><path fill="#000" fill-opacity=".33" d="M342.6 150.6c12.5-12.5 12.5-32.8 0-45.3s-32.8-12.5-45.3 0L192 210.7 86.6 105.4c-12.5-12.5-32.8-12.5-45.3 0s-12.5 32.8 0 45.3L146.7 256 41.4 361.4c-12.5 12.5-12.5 32.8 0 45.3s32.8 12.5 45.3 0L192 301.3 297.4 406.6c12.5 12.5 32.8 12.5 45.3 0s12.5-32.8 0-45.3L237.3 256 342.6 150.6z"/></svg>
<svg style="left:358.1px;top:723.6px" width="10.7" height="12.3" viewBox="0 0 10.700 12.300" ><path fill="#333" d="M2.300 0a.7.700 0 0 1 .7.700v.8h4.700V.7a.7.700 0 0 1 1.400 0v.8h.3a1.300 1.300 0 0 1 1.300 1.300v8.200a1.300 1.300 0 0 1-1.300 1.300H1.300A1.300 1.300 0 0 1 0 11V2.800a1.300 1.300 0 0 1 1.300-1.300h.3V.7a.7.700 0 0 1 .7-.7z"/><rect x="0" y="3.700" width="10.700" height=".8" fill="#f8bbd0" fill-opacity=".6"/><rect x="1.900" y="6.300" width="3.200" height="3.100" rx=".4" fill="#f8bbd0"/></svg>
<svg style="left:593.1px;top:721.1px" width="13.2" height="16.9" viewBox="0 0 13.2 16.9" ><g fill="#000" fill-opacity=".3"><path d="M1.900 0h9.400a.9.900 0 0 1 0 1.800h-1.200l.35 4.500c1.500.8 2.600 2.100 2.750 3.800a.9.900 0 0 1-.9 1H.9a.9.900 0 0 1-.9-1C.15 8.400 1.250 7.100 2.750 6.300L3.100 1.800H1.900a.9.900 0 0 1 0-1.800z"/><rect x="5.600" y="12.200" width="2" height="4.700" rx="1"/></g></svg>
<svg style="left:855.5px;top:725.2px" width="9.4" height="9.4" viewBox="32 96 320 320" ><path fill="#000" fill-opacity=".33" d="M342.6 150.6c12.5-12.5 12.5-32.8 0-45.3s-32.8-12.5-45.3 0L192 210.7 86.6 105.4c-12.5-12.5-32.8-12.5-45.3 0s-12.5 32.8 0 45.3L146.7 256 41.4 361.4c-12.5 12.5-12.5 32.8 0 45.3s32.8 12.5 45.3 0L192 301.3 297.4 406.6c12.5 12.5 32.8 12.5 45.3 0s12.5-32.8 0-45.3L237.3 256 342.6 150.6z"/></svg>
<div class="t" style="left:50.0px;top:12.0px;font-size:26.0px;color:#fff;font-weight:bold;letter-spacing:0.83px">Mail</div>
<div class="t" style="left:111.0px;top:12.0px;font-size:26.0px;color:#86efac;font-weight:bold;letter-spacing:-1.00px">OS</div>
<div class="t" style="left:881.1px;top:14.0px;font-size:16.4px;color:#fff;-webkit-text-stroke:.12px #fff;transform:scaleX(1.103)">離席</div>
<div class="t" style="left:949.3px;top:14.5px;font-size:18.3px;color:#fff;letter-spacing:0.50px">2026-03-25 (Wed)</div>
<div class="t" style="left:1137.0px;top:14.5px;font-size:18.3px;color:#fff;letter-spacing:0.30px">demo-try@1dallmail.com</div>
<div class="t" style="left:1414.3px;top:14.5px;font-size:16.4px;color:#fff;-webkit-text-stroke:.12px #fff;transform:scaleX(1.116)">アカウント</div>
<div class="t" style="left:39.2px;top:66.1px;font-size:15.8px;color:#222;-webkit-text-stroke:.12px #222;transform:scaleX(1.091)">メール</div>
<div class="t" style="left:137.9px;top:66.1px;font-size:15.8px;color:#222;-webkit-text-stroke:.12px #222;transform:scaleX(1.083)">アドレス帳</div>
<div class="t" style="left:270.4px;top:66.1px;font-size:15.8px;color:#222;-webkit-text-stroke:.12px #222;transform:scaleX(1.052)">フォルダー</div>
<div class="t" style="left:402.0px;top:66.1px;font-size:15.8px;color:#222;-webkit-text-stroke:.12px #222;transform:scaleX(1.132)">チャット</div>
<div class="t" style="left:515.8px;top:66.1px;font-size:15.8px;color:#222;-webkit-text-stroke:.12px #222;transform:scaleX(1.172)">タスク</div>
<div class="t" style="left:614.7px;top:66.1px;font-size:15.8px;color:#222;-webkit-text-stroke:.12px #222;transform:scaleX(1.065)">フィルター</div>
<div class="t" style="left:747.3px;top:66.1px;font-size:15.8px;color:#222;-webkit-text-stroke:.12px #222;transform:scaleX(1.055)">ツール</div>
<div class="t" style="left:52.0px;top:111.7px;font-size:15.4px;color:#5c5c5c;-webkit-text-stroke:.12px #5c5c5c;transform:scaleX(1.082)">更新</div>
<div class="t" style="left:118.0px;top:111.7px;font-size:15.4px;color:#5c5c5c;-webkit-text-stroke:.12px #5c5c5c;transform:scaleX(1.082)">受信</div>
<div class="t" style="left:185.3px;top:111.7px;font-size:15.4px;color:#5c5c5c;-webkit-text-stroke:.12px #5c5c5c;transform:scaleX(1.090)">下書き</div>
<div class="t" style="left:265.5px;top:111.7px;font-size:15.4px;color:#5c5c5c;-webkit-text-stroke:.12px #5c5c5c;transform:scaleX(1.088)">送信済</div>
<div class="t" style="left:373.4px;top:111.7px;font-size:15.4px;color:#5c5c5c;-webkit-text-stroke:.12px #5c5c5c;transform:scaleX(1.024)"><span style="font-size:1.07em;letter-spacing:0.77px;-webkit-text-stroke:0">AI</span>メール</div>
<div class="t" style="left:470.7px;top:111.7px;font-size:15.4px;color:#5c5c5c;-webkit-text-stroke:.12px #5c5c5c;transform:scaleX(1.053)">迷惑メール</div>
<div class="t" style="left:581.8px;top:111.7px;font-size:15.4px;color:#5c5c5c;-webkit-text-stroke:.12px #5c5c5c;transform:scaleX(1.129)">ごみ箱</div>
<div class="t" style="left:666.6px;top:111.7px;font-size:15.4px;color:#5c5c5c;-webkit-text-stroke:.12px #5c5c5c;transform:scaleX(1.083)">設定</div>
<div class="t" style="left:32.1px;top:160.3px;font-size:15.4px;color:#1a73e8;font-weight:bold;transform:scaleX(1.097)">アカウント</div>
<div class="t" style="left:32.1px;top:254.5px;font-size:15.4px;color:#1a73e8;font-weight:bold;transform:scaleX(1.061)">アドレス帳</div>
<div class="t" style="left:37.9px;top:344.1px;font-size:15.4px;color:#1a73e8;font-weight:bold;transform:scaleX(1.075)">チャット</div>
<div class="t" style="left:25.7px;top:434.7px;font-size:15.4px;color:#1a73e8;font-weight:bold;transform:scaleX(1.107)">ドキュメント</div>
<div class="t" style="left:32.7px;top:681.5px;font-size:15.4px;color:#1a73e8;font-weight:bold;transform:scaleX(1.093)">タスク</div>
<div class="t" style="left:31.7px;top:848.1px;font-size:15.4px;color:#1a73e8;font-weight:bold;transform:scaleX(1.066)">ワークフロー</div>
<div class="t" style="left:32.8px;top:1013.9px;font-size:15.4px;color:#1a73e8;font-weight:bold;transform:scaleX(1.033)">マーケティング</div>
<div class="t" style="left:47.2px;top:196.3px;font-size:15.4px;color:#222;font-weight:bold;transform:scaleX(1.058)">デモユーザー</div>
<div class="t" style="left:45.7px;top:289.3px;font-size:15.4px;color:#333;-webkit-text-stroke:.12px #333;transform:scaleX(1.071)">アドレス帳を開く</div>
<div class="t" style="left:44.4px;top:380.5px;font-size:15.4px;color:#333;-webkit-text-stroke:.12px #333;transform:scaleX(1.076)">チャットを開く</div>
<div class="t" style="left:46.9px;top:471.1px;font-size:15.4px;color:#333;-webkit-text-stroke:.12px #333;transform:scaleX(1.057)">すべてのドキュメント</div>
<div class="t" style="left:44.5px;top:717.2px;font-size:15.4px;color:#333;-webkit-text-stroke:.12px #333;transform:scaleX(1.099)">プロジェクト</div>
<div class="t" style="left:41.5px;top:755.9px;font-size:15.4px;color:#333;-webkit-text-stroke:.12px #333;transform:scaleX(1.056)">タスク一覧</div>
<div class="t" style="left:40.5px;top:883.4px;font-size:15.4px;color:#333;-webkit-text-stroke:.12px #333;transform:scaleX(1.047)">申請一覧</div>
<div class="t" style="left:48.3px;top:921.1px;font-size:15.4px;color:#333;-webkit-text-stroke:.12px #333;transform:scaleX(1.033)">申請種別</div>
<div class="t" style="left:44.7px;top:959.4px;font-size:15.4px;color:#333;-webkit-text-stroke:.12px #333;transform:scaleX(1.072)">承認ルート</div>
<div class="t" style="left:43.7px;top:1049.8px;font-size:15.4px;color:#333;-webkit-text-stroke:.12px #333;transform:scaleX(1.079)">リスト管理</div>
<div class="t" style="left:42.5px;top:1087.5px;font-size:15.4px;color:#333;-webkit-text-stroke:.12px #333;transform:scaleX(1.099)">テンプレート</div>
<div class="t" style="left:42.6px;top:1125.7px;font-size:15.4px;color:#333;-webkit-text-stroke:.12px #333;transform:scaleX(1.061)">キャンペーン</div>
<div class="t" style="left:46.7px;top:1163.3px;font-size:15.4px;color:#333;-webkit-text-stroke:.12px #333;transform:scaleX(1.048)">ステップメール</div>
<div class="t" style="left:42.5px;top:793.0px;font-size:15.4px;color:#222;font-weight:bold;transform:scaleX(1.052)">メモ帳</div>
<div class="t" style="left:26.7px;top:506.2px;font-size:13.4px;color:#444;-webkit-text-stroke:.12px #444;transform:scaleX(1.109)">新サービス提案資料<span style="font-size:1.07em;letter-spacing:0.67px;-webkit-text-stroke:0">.pptx</span></div>
<div class="t" style="left:26.7px;top:537.0px;font-size:13.4px;color:#444;-webkit-text-stroke:.12px #444;transform:scaleX(1.090)">顧客リスト<span style="font-size:1.07em;letter-spacing:0.67px;-webkit-text-stroke:0">_</span>関東地区<span style="font-size:1.07em;letter-spacing:0.67px;-webkit-text-stroke:0">.xlsx</span></div>
<div class="t" style="left:26.7px;top:568.2px;font-size:13.4px;color:#444;-webkit-text-stroke:.12px #444;transform:scaleX(1.083)"><span style="font-size:1.07em;letter-spacing:0.67px;-webkit-text-stroke:0">2026</span>年度 事業計画書<span style="font-size:1.07em;letter-spacing:0.67px;-webkit-text-stroke:0">.docx</span></div>
<div class="t" style="left:27.8px;top:599.4px;font-size:13.4px;color:#444;-webkit-text-stroke:.12px #444;transform:scaleX(1.067)">売上管理表<span style="font-size:1.07em;letter-spacing:0.67px;-webkit-text-stroke:0">_2026</span>年<span style="font-size:1.07em;letter-spacing:0.67px;-webkit-text-stroke:0">2</span>月<span style="font-size:1.07em;letter-spacing:0.67px;-webkit-text-stroke:0">.xlsx</span></div>
<div class="t" style="left:27.8px;top:630.6px;font-size:13.4px;color:#444;-webkit-text-stroke:.12px #444;transform:scaleX(1.072)">議事録<span style="font-size:1.07em;letter-spacing:0.67px;-webkit-text-stroke:0">_</span>定例会議<span style="font-size:1.07em;letter-spacing:0.67px;-webkit-text-stroke:0">_0219.docx</span></div>
<div class="t" style="left:132.8px;top:755.5px;font-size:15.5px;color:#fff;font-weight:bold;font-family:'Liberation Serif',serif;letter-spacing:1.30px">21</div>
<div class="t" style="left:207.0px;top:792.4px;font-size:15.5px;color:#fff;font-weight:bold;font-family:'Liberation Serif',serif">6</div>
<div class="t" style="left:274.9px;top:160.3px;font-size:14.4px;color:#222;font-weight:bold;transform:scaleX(1.141)">メモ帳</div>
<div class="t" style="left:382.9px;top:161.5px;font-size:13.2px;color:#fff;-webkit-text-stroke:.12px #fff;transform:scaleX(1.140)">新規メモ</div>
<div class="t" style="left:1509.6px;top:160.3px;font-size:12.4px;color:#666;-webkit-text-stroke:.12px #666;transform:scaleX(1.084)"><span style="font-size:1.07em;letter-spacing:0.62px;-webkit-text-stroke:0">6</span>件</div>
<div class="t" style="left:269.2px;top:257.0px;font-size:14.4px;color:#222;font-weight:bold;transform:scaleX(1.031)">今週の<span style="font-size:1.14em;letter-spacing:0.72px;-webkit-text-stroke:0">TODO</span></div>
<div class="t" style="left:268.6px;top:286.9px;font-size:14.0px;color:#333;-webkit-text-stroke:.12px #333;transform:scaleX(1.025)"><span style="font-size:1.07em;letter-spacing:0.70px;-webkit-text-stroke:0">- </span>デザインカンプのレビュー</div>
<div class="t" style="left:268.6px;top:309.9px;font-size:14.0px;color:#333;-webkit-text-stroke:.12px #333;transform:scaleX(0.980)"><span style="font-size:1.07em;letter-spacing:0.70px;-webkit-text-stroke:0">- CMS</span>選定の最終判断</div>
<div class="t" style="left:268.6px;top:333.0px;font-size:14.0px;color:#333;-webkit-text-stroke:.12px #333;transform:scaleX(1.032)"><span style="font-size:1.07em;letter-spacing:0.70px;-webkit-text-stroke:0">- A</span>社見積書の回答</div>
<div class="t" style="left:268.6px;top:356.0px;font-size:14.0px;color:#333;-webkit-text-stroke:.12px #333;transform:scaleX(1.016)"><span style="font-size:1.07em;letter-spacing:0.70px;-webkit-text-stroke:0">- </span>月次レポート作成</div>
<div class="t" style="left:268.6px;top:379.1px;font-size:14.0px;color:#333;-webkit-text-stroke:.12px #333;transform:scaleX(1.016)"><span style="font-size:1.07em;letter-spacing:0.70px;-webkit-text-stroke:0">- </span>展示会の準備確認</div>
<div class="t" style="left:372.2px;top:228.4px;font-size:13.2px;color:#333;letter-spacing:1.00px">2/22</div>
<div class="t" style="left:590.3px;top:257.0px;font-size:14.4px;color:#222;font-weight:bold;transform:scaleX(1.108)"><span style="font-size:1.14em;letter-spacing:0.72px;-webkit-text-stroke:0">A</span>社 商談メモ</div>
<div class="t" style="left:591.8px;top:286.9px;font-size:14.0px;color:#333;-webkit-text-stroke:.12px #333;transform:scaleX(1.017)">担当<span style="font-size:1.07em;letter-spacing:0.70px;-webkit-text-stroke:0">: </span>山田部長</div>
<div class="t" style="left:591.8px;top:309.9px;font-size:14.0px;color:#333;-webkit-text-stroke:.12px #333;transform:scaleX(1.011)">予算<span style="font-size:1.07em;letter-spacing:0.70px;-webkit-text-stroke:0">: 500</span>万円</div>
<div class="t" style="left:590.8px;top:333.0px;font-size:14.0px;color:#333;-webkit-text-stroke:.12px #333;transform:scaleX(1.042)">導入時期<span style="font-size:1.07em;letter-spacing:0.70px;-webkit-text-stroke:0">: 4</span>月</div>
<div class="t" style="left:590.8px;top:356.0px;font-size:14.0px;color:#333;-webkit-text-stroke:.12px #333;transform:scaleX(1.039)">決裁者<span style="font-size:1.07em;letter-spacing:0.70px;-webkit-text-stroke:0">: </span>取締役</div>
<div class="t" style="left:590.8px;top:402.1px;font-size:14.0px;color:#333;-webkit-text-stroke:.12px #333;transform:scaleX(1.047)">次のステップ<span style="font-size:1.07em;letter-spacing:0.70px;-webkit-text-stroke:0">:</span></div>
<div class="t" style="left:588.7px;top:425.1px;font-size:14.0px;color:#333;-webkit-text-stroke:.12px #333;transform:scaleX(1.038)"><span class="ar">→</span><span style="font-size:1.07em;letter-spacing:0.70px;-webkit-text-stroke:0"> 3/5</span>にプレゼン実施</div>
<div class="t" style="left:588.7px;top:448.2px;font-size:14.0px;color:#333;-webkit-text-stroke:.12px #333;transform:scaleX(1.036)"><span class="ar">→</span> カスタマイズ要件のヒアリング</div>
<div class="t" style="left:694.4px;top:228.4px;font-size:13.2px;color:#333;letter-spacing:1.00px">2/20</div>
<div class="t" style="left:913.5px;top:257.0px;font-size:14.4px;color:#222;font-weight:bold;transform:scaleX(1.135)">会議メモ<span style="font-size:1.14em;letter-spacing:0.72px;-webkit-text-stroke:0"> 2/21</span></div>
<div class="t" style="left:912.9px;top:286.9px;font-size:14.0px;color:#333;-webkit-text-stroke:.12px #333;transform:scaleX(1.035)">参加者<span style="font-size:1.07em;letter-spacing:0.70px;-webkit-text-stroke:0">: </span>田中、佐藤、鈴木</div>
<div class="t" style="left:913.9px;top:333.0px;font-size:14.0px;color:#333;-webkit-text-stroke:.12px #333;transform:scaleX(1.048)">議題<span style="font-size:1.07em;letter-spacing:0.70px;-webkit-text-stroke:0">:</span></div>
<div class="t" style="left:912.9px;top:356.0px;font-size:14.0px;color:#333;-webkit-text-stroke:.12px #333;transform:scaleX(1.029)"><span style="font-size:1.07em;letter-spacing:0.70px;-webkit-text-stroke:0">1. Web</span>リニューアル進捗 <span class="ar">→</span> 予定通り</div>
<div class="t" style="left:912.9px;top:379.1px;font-size:14.0px;color:#333;-webkit-text-stroke:.12px #333;transform:scaleX(1.036)"><span style="font-size:1.07em;letter-spacing:0.70px;-webkit-text-stroke:0">2. </span>モバイルアプリ <span class="ar">→</span> 認証機能<span style="font-size:1.07em;letter-spacing:0.70px;-webkit-text-stroke:0">70%</span>完了</div>
<div class="t" style="left:912.9px;top:402.1px;font-size:14.0px;color:#333;-webkit-text-stroke:.12px #333;transform:scaleX(1.032)"><span style="font-size:1.07em;letter-spacing:0.70px;-webkit-text-stroke:0">3. </span>来月の展示会 <span class="ar">→</span> ブース手配済み</div>
<div class="t" style="left:912.9px;top:448.2px;font-size:14.0px;color:#333;-webkit-text-stroke:.12px #333;transform:scaleX(1.042)">次回<span style="font-size:1.07em;letter-spacing:0.70px;-webkit-text-stroke:0">: 2/28(</span>金<span style="font-size:1.07em;letter-spacing:0.70px;-webkit-text-stroke:0">) 14:00</span></div>
<div class="t" style="left:1016.5px;top:228.4px;font-size:13.2px;color:#333;letter-spacing:1.00px">2/21</div>
<div class="t" style="left:1236.0px;top:257.0px;font-size:14.4px;color:#222;font-weight:bold;transform:scaleX(1.115)">新機能アイデア</div>
<div class="t" style="left:1235.4px;top:286.9px;font-size:14.0px;color:#333;-webkit-text-stroke:.12px #333;transform:scaleX(1.025)"><span style="font-size:1.07em;letter-spacing:0.70px;-webkit-text-stroke:0">- </span>ドラッグ<span style="font-size:1.07em;letter-spacing:0.70px;-webkit-text-stroke:0">&amp;</span>ドロップでメール整理</div>
<div class="t" style="left:1235.4px;top:309.9px;font-size:14.0px;color:#333;-webkit-text-stroke:.12px #333;transform:scaleX(1.032)"><span style="font-size:1.07em;letter-spacing:0.70px;-webkit-text-stroke:0">- AI</span>要約の精度向上</div>
<div class="t" style="left:1235.4px;top:333.0px;font-size:14.0px;color:#333;-webkit-text-stroke:.12px #333;transform:scaleX(1.029)"><span style="font-size:1.07em;letter-spacing:0.70px;-webkit-text-stroke:0">- </span>カレンダー連携</div>
<div class="t" style="left:1235.4px;top:356.0px;font-size:14.0px;color:#333;-webkit-text-stroke:.12px #333;transform:scaleX(0.985)"><span style="font-size:1.07em;letter-spacing:0.70px;-webkit-text-stroke:0">- Slack</span>通知連携</div>
<div class="t" style="left:1235.4px;top:379.1px;font-size:14.0px;color:#333;-webkit-text-stroke:.12px #333;transform:scaleX(1.023)"><span style="font-size:1.07em;letter-spacing:0.70px;-webkit-text-stroke:0">- </span>ダッシュボードのカスタマイズ</div>
<div class="t" style="left:1339.0px;top:228.4px;font-size:13.2px;color:#333;letter-spacing:1.00px">2/18</div>
<div class="t" style="left:269.2px;top:747.0px;font-size:14.4px;color:#222;font-weight:bold;transform:scaleX(1.130)">経費精算リマインド</div>
<div class="t" style="left:268.6px;top:776.9px;font-size:14.0px;color:#333;-webkit-text-stroke:.12px #333;transform:scaleX(1.035)">大阪出張分の精算 <span class="ar">→</span> 申請済み</div>
<div class="t" style="left:268.6px;top:799.9px;font-size:14.0px;color:#333;-webkit-text-stroke:.12px #333;transform:scaleX(1.039)">名刺印刷代 <span class="ar">→</span> 領収書確認中</div>
<div class="t" style="left:268.6px;top:823.0px;font-size:14.0px;color:#333;-webkit-text-stroke:.12px #333;transform:scaleX(1.036)">モニターアーム <span class="ar">→</span> 下書き作成中</div>
<div class="t" style="left:372.2px;top:718.4px;font-size:13.2px;color:#333;letter-spacing:1.00px">2/19</div>
<div class="t" style="left:591.4px;top:747.0px;font-size:14.4px;color:#222;font-weight:bold;transform:scaleX(1.151)">書籍リスト</div>
<div class="t" style="left:590.8px;top:776.9px;font-size:14.0px;color:#333;-webkit-text-stroke:.12px #333;transform:scaleX(1.025)"><span style="font-size:1.07em;letter-spacing:0.70px;-webkit-text-stroke:0">- </span>プロダクトマネジメント入門</div>
<div class="t" style="left:590.8px;top:799.9px;font-size:14.0px;color:#333;-webkit-text-stroke:.12px #333;transform:scaleX(1.023)"><span style="font-size:1.07em;letter-spacing:0.70px;-webkit-text-stroke:0">- </span>チームトポロジー</div>
<div class="t" style="left:590.8px;top:823.0px;font-size:14.0px;color:#333;-webkit-text-stroke:.12px #333;transform:scaleX(0.967)"><span style="font-size:1.07em;letter-spacing:0.70px;-webkit-text-stroke:0">- Lean</span>と<span style="font-size:1.07em;letter-spacing:0.70px;-webkit-text-stroke:0">DevOps</span>の科学</div>
<div class="t" style="left:590.8px;top:846.0px;font-size:14.0px;color:#333;-webkit-text-stroke:.12px #333;transform:scaleX(1.023)"><span style="font-size:1.07em;letter-spacing:0.70px;-webkit-text-stroke:0">- </span>ユーザーストーリーマッピング</div>
</body>
</html>
